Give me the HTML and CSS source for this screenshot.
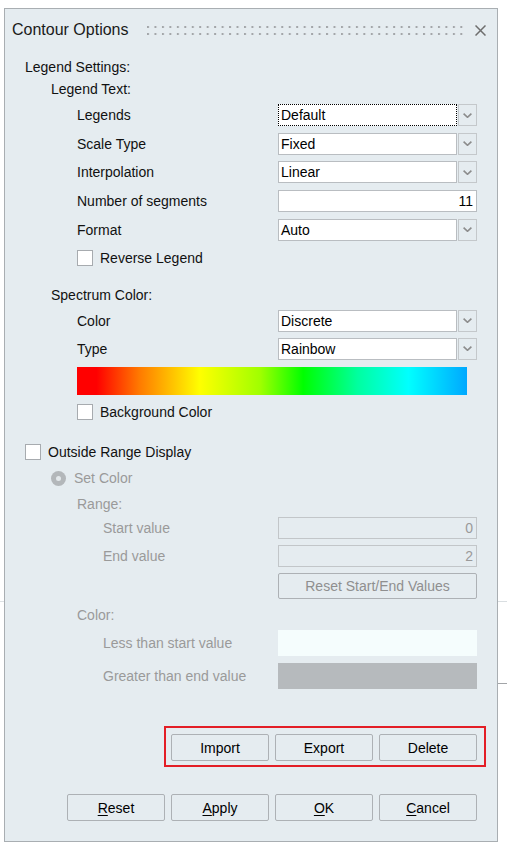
FILE: index.html
```html
<!DOCTYPE html>
<html>
<head>
<meta charset="utf-8">
<link rel="stylesheet" href="styles.css">
</head>
<body>
<div class="edge edge-a"></div>
<div class="edge edge-b"></div>
<div class="edge edge-c"></div>
<div class="panel">
  <div class="titlebar">
    <span class="title">Contour Options</span>
    <svg class="grip" height="12" aria-hidden="true">
      <defs>
        <pattern id="dots" width="7.46" height="12" patternUnits="userSpaceOnUse">
          <rect x="0" y="2" width="2" height="2" fill="#a3a6a9"/>
          <rect x="0" y="9" width="2" height="2" fill="#a3a6a9"/>
        </pattern>
      </defs>
      <rect x="0" y="0" width="100%" height="12" fill="url(#dots)"/>
    </svg>
    <svg class="close" width="11" height="11" viewBox="0 0 11 11" aria-hidden="true">
      <path d="M0.5 0.5 L10.5 10.5 M10.5 0.5 L0.5 10.5" stroke="#6e6e6e" stroke-width="1.5" fill="none"/>
    </svg>
  </div>

  <div class="content">
    <div class="heading l1 m-ls">Legend Settings:</div>
    <div class="heading l2 m-lt">Legend Text:</div>

    <div class="group g-legend">
      <div class="row"><span class="label l3">Legends</span>
        <div class="select"><span class="box focus">Default</span><span class="arrow"><svg width="9" height="5" viewBox="0 0 9 5"><polyline points="0.6,0.6 4.5,4.3 8.4,0.6" fill="none" stroke="#8c8c8c" stroke-width="1.6"/></svg></span></div></div>
      <div class="row"><span class="label l3">Scale Type</span>
        <div class="select"><span class="box">Fixed</span><span class="arrow"><svg width="9" height="5" viewBox="0 0 9 5"><polyline points="0.6,0.6 4.5,4.3 8.4,0.6" fill="none" stroke="#8c8c8c" stroke-width="1.6"/></svg></span></div></div>
      <div class="row"><span class="label l3">Interpolation</span>
        <div class="select"><span class="box">Linear</span><span class="arrow"><svg width="9" height="5" viewBox="0 0 9 5"><polyline points="0.6,0.6 4.5,4.3 8.4,0.6" fill="none" stroke="#8c8c8c" stroke-width="1.6"/></svg></span></div></div>
      <div class="row"><span class="label l3">Number of segments</span>
        <div class="input">11</div></div>
      <div class="row"><span class="label l3">Format</span>
        <div class="select"><span class="box">Auto</span><span class="arrow"><svg width="9" height="5" viewBox="0 0 9 5"><polyline points="0.6,0.6 4.5,4.3 8.4,0.6" fill="none" stroke="#8c8c8c" stroke-width="1.6"/></svg></span></div></div>
    </div>

    <div class="check l3 m-rev"><span class="cb"></span><span>Reverse Legend</span></div>

    <div class="heading l2 m-spec">Spectrum Color:</div>

    <div class="group g-spec">
      <div class="row"><span class="label l3">Color</span>
        <div class="select"><span class="box">Discrete</span><span class="arrow"><svg width="9" height="5" viewBox="0 0 9 5"><polyline points="0.6,0.6 4.5,4.3 8.4,0.6" fill="none" stroke="#8c8c8c" stroke-width="1.6"/></svg></span></div></div>
      <div class="row"><span class="label l3">Type</span>
        <div class="select"><span class="box">Rainbow</span><span class="arrow"><svg width="9" height="5" viewBox="0 0 9 5"><polyline points="0.6,0.6 4.5,4.3 8.4,0.6" fill="none" stroke="#8c8c8c" stroke-width="1.6"/></svg></span></div></div>
    </div>

    <div class="rainbow"></div>

    <div class="check l3 m-bg"><span class="cb"></span><span>Background Color</span></div>

    <div class="check l1 m-out"><span class="cb"></span><span>Outside Range Display</span></div>

    <div class="radio-row l2 m-set"><span class="radio"><span class="dot"></span></span><span>Set Color</span></div>

    <div class="heading l3 dis m-range">Range:</div>

    <div class="group g-range">
      <div class="row"><span class="label l4 dis">Start value</span><div class="input disabled">0</div></div>
      <div class="row"><span class="label l4 dis">End value</span><div class="input disabled">2</div></div>
      <div class="row tall"><span class="label"></span><div class="btn wide dis">Reset Start/End Values</div></div>
    </div>

    <div class="heading l3 dis m-color">Color:</div>

    <div class="group g-color">
      <div class="row tall"><span class="label l4 dis">Less than start value</span><div class="swatch light"></div></div>
      <div class="row tall"><span class="label l4 dis">Greater than end value</span><div class="swatch grey"></div></div>
    </div>

    <div class="highlight">
      <div class="btn">Import</div>
      <div class="btn">Export</div>
      <div class="btn">Delete</div>
    </div>

    <div class="actions">
      <div class="btn"><u>R</u>eset</div>
      <div class="btn"><u>A</u>pply</div>
      <div class="btn"><u>O</u>K</div>
      <div class="btn"><u>C</u>ancel</div>
    </div>
  </div>
</div>
</body>
</html>
```

FILE: styles.css
```css
html, body {
  background: #ffffff;
}
body {
  margin: 0;
  padding: 8px 0 0 4px;
  font-family: "Liberation Sans", Arial, sans-serif;
  font-size: 14px;
  color: #111111;
  position: relative;
  min-height: 851px;
}

.edge {
  position: absolute;
  height: 1px;
}
.edge-a { left: 498px; width: 9px; top: 601px; background: #d9dee1; }
.edge-b { left: 498px; width: 9px; top: 683px; background: #a2a5a8; }
.edge-c { left: 0; width: 4px; top: 601px; background: #dde1e4; }

.panel {
  width: 494px;
  height: 834px;
  box-sizing: border-box;
  border: 1px solid #a9aeb2;
  background: #e5ecf0;
  display: flex;
  flex-direction: column;
}

.titlebar {
  height: 42px;
  display: flex;
  align-items: center;
  padding: 0 11px 0 7px;
}
.title {
  font-size: 16px;
  color: #1a1a1a;
  white-space: nowrap;
}
.grip {
  flex: 1;
  margin: 0 8px 0 18px;
  display: block;
}
.close {
  display: block;
}

.content {
  display: flex;
  flex-direction: column;
  padding-right: 20px;
}

.l1 { padding-left: 20px; }
.l2 { padding-left: 46px; }
.l3 { padding-left: 72px; }
.l4 { padding-left: 98px; }
.dis { color: #9a9a9a; }

.heading {
  line-height: 20px;
  height: 20px;
  white-space: nowrap;
}
.m-ls { margin-top: 6px; }
.m-lt { margin-top: 2px; }
.m-spec { margin-top: 17px; }
.m-range { margin-top: 6px; }
.m-color { margin-top: 6px; }

.group {
  display: flex;
  flex-direction: column;
}
.g-legend { margin-top: 5px; gap: 6.67px; }
.g-spec { margin-top: 5px; gap: 6px; }
.g-range { margin-top: 3px; gap: 6px; }
.g-color { margin-top: 5px; gap: 7px; }

.row {
  display: flex;
  align-items: center;
  height: 22px;
}
.row.tall { height: 26px; }
.label {
  flex: 1;
  white-space: nowrap;
}

.select {
  width: 199px;
  height: 22px;
  display: flex;
  gap: 1px;
}
.box {
  width: 179px;
  height: 22px;
  box-sizing: border-box;
  border: 1px solid #b9bdc1;
  background: #ffffff;
  padding-left: 2px;
  line-height: 20px;
  color: #000;
}
.box.focus {
  border: 1px dotted #000000;
}
.arrow {
  width: 19px;
  height: 22px;
  box-sizing: border-box;
  border: 1px solid #c4c8cb;
  background: #e5ecf0;
  display: flex;
  align-items: center;
  justify-content: center;
}
.arrow svg { display: block; }

.input {
  width: 199px;
  height: 22px;
  box-sizing: border-box;
  border: 1px solid #b9bdc1;
  background: #ffffff;
  text-align: right;
  padding-right: 3px;
  line-height: 20px;
  color: #000;
}
.input.disabled {
  background: #e5ecf0;
  border-color: #c2c6c9;
  color: #9a9a9a;
}

.check, .radio-row {
  display: flex;
  align-items: center;
  height: 20px;
  gap: 7px;
  white-space: nowrap;
}
.cb {
  width: 16px;
  height: 16px;
  box-sizing: border-box;
  border: 1px solid #a7abaf;
  background: #ffffff;
  flex: none;
}
.m-rev { margin-top: 7.33px; }
.m-bg { margin-top: 7.5px; }
.m-out { margin-top: 20px; }
.m-set { margin-top: 6px; color: #9a9a9a; gap: 8px; }

.radio {
  width: 15px;
  height: 15px;
  border-radius: 50%;
  background: #b3b7ba;
  display: flex;
  align-items: center;
  justify-content: center;
  flex: none;
}
.radio .dot {
  width: 5px;
  height: 5px;
  border-radius: 50%;
  background: #e3e8eb;
}

.rainbow {
  margin-top: 7px;
  margin-left: 72px;
  width: 390px;
  height: 28px;
  background: linear-gradient(to right,
    #ff0000 0%, #ff0000 5%,
    #ff7a00 16%,
    #ffff00 31.5%,
    #a0ff00 47%,
    #00ff00 58%,
    #00ffa0 72%,
    #00ffff 85%,
    #00a8ff 100%);
}

.btn {
  width: 98px;
  height: 27px;
  box-sizing: border-box;
  border: 1px solid #adb1b5;
  border-radius: 2px;
  background: #e5ecf0;
  display: flex;
  align-items: center;
  justify-content: center;
  white-space: nowrap;
  color: #000;
}
.btn.wide {
  width: 199px;
  height: 26px;
  color: #8f8f8f;
}

.swatch {
  width: 199px;
  height: 26px;
}
.swatch.light { background: #f5fdfd; }
.swatch.grey { background: #b6babd; }

.highlight {
  margin-top: 37px;
  align-self: flex-end;
  margin-right: -9px;
  border: 2px solid #e31e26;
  padding: 6px 7px 4px 5px;
  display: flex;
  gap: 6px;
}

.actions {
  margin-top: 27px;
  display: flex;
  justify-content: flex-end;
  gap: 6px;
}
.actions u {
  text-decoration: underline;
  text-underline-offset: 2px;
}
```
